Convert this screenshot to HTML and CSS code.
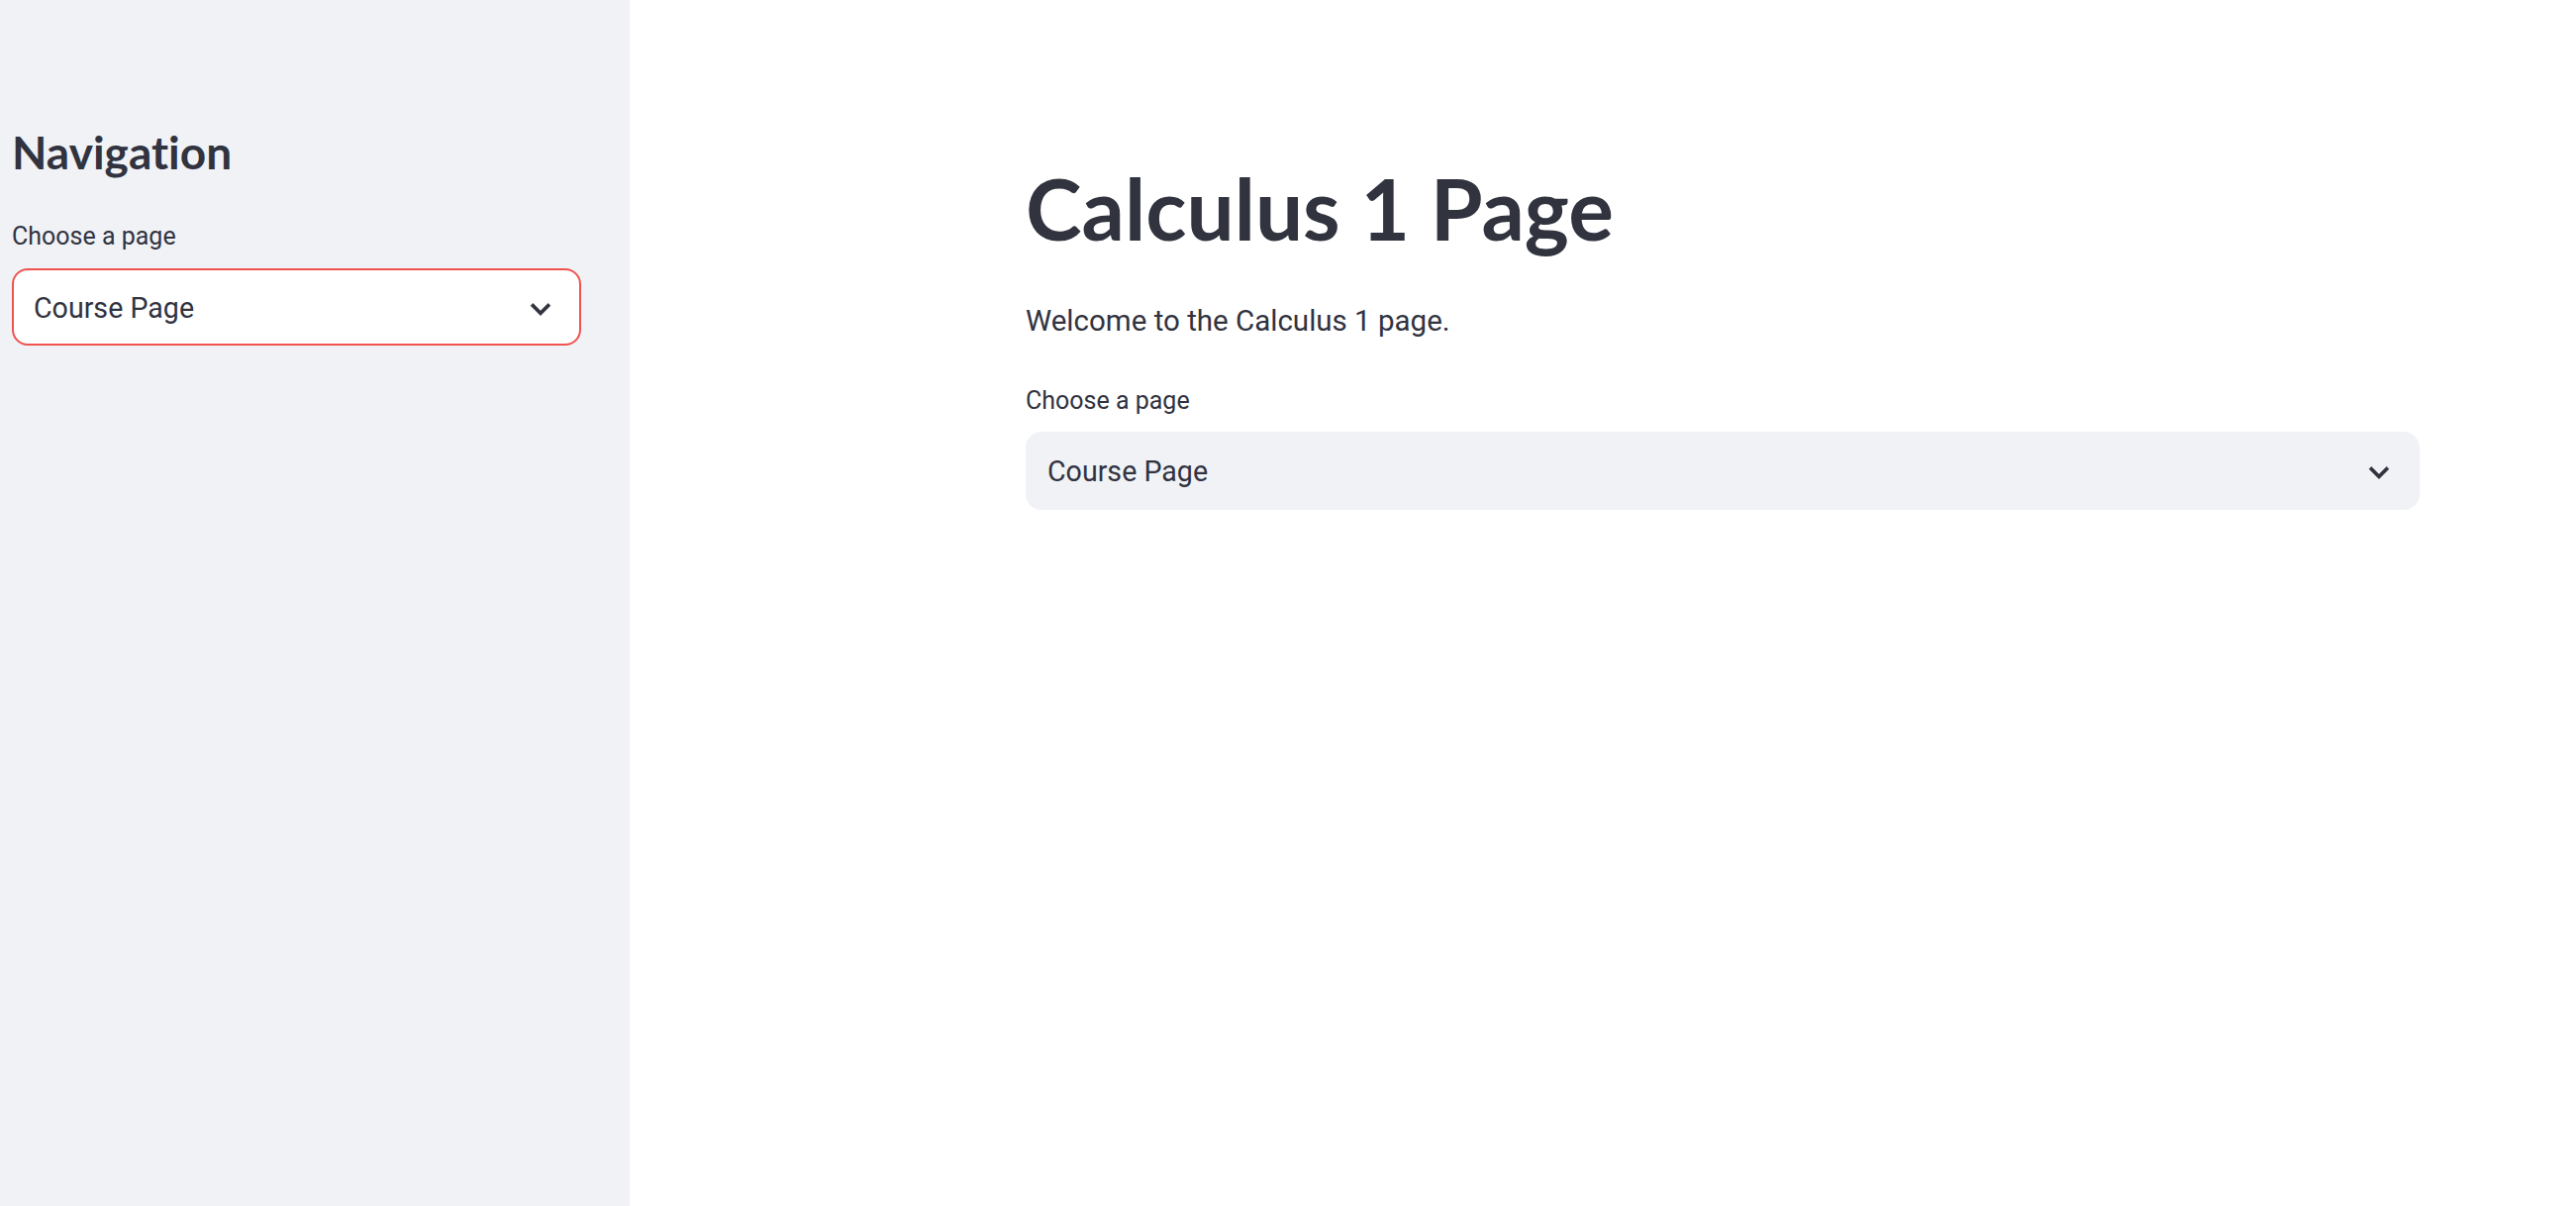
FILE: index.html
```html
<!DOCTYPE html>
<html lang="en">
<head>
<meta charset="utf-8">
<title>Calculus 1 Page</title>
<link rel="stylesheet" href="styles.css">
</head>
<body>
<div class="app">
  <aside class="sidebar">
    <h2 class="side-title">Navigation</h2>
    <div class="field">
      <label class="label">Choose a page</label>
      <div class="select select-focused">
        <span class="select-value">Course Page</span>
        <svg class="chevron" viewBox="0 0 24 24" width="40" height="40" aria-hidden="true"><path d="M16.59 8.59L12 13.17 7.41 8.59 6 10l6 6 6-6z" fill="#31333f" stroke="#31333f" stroke-width="0.25"/></svg>
      </div>
    </div>
  </aside>
  <main class="main">
    <div class="block">
      <h1 class="title">Calculus 1 Page</h1>
      <p class="text">Welcome to the Calculus 1 page.</p>
      <div class="field field-main">
        <label class="label">Choose a page</label>
        <div class="select select-plain">
          <span class="select-value">Course Page</span>
          <svg class="chevron" viewBox="0 0 24 24" width="40" height="40" aria-hidden="true"><path d="M16.59 8.59L12 13.17 7.41 8.59 6 10l6 6 6-6z" fill="#31333f" stroke="#31333f" stroke-width="0.25"/></svg>
        </div>
      </div>
    </div>
  </main>
</div>
</body>
</html>
```
FILE: styles.css
```css
html, body {
  margin: 0;
  padding: 0;
  height: 100%;
  overflow: hidden;
  background: #ffffff;
  color: #31333f;
  font-family: Roboto, "Liberation Sans", sans-serif;
  font-variant-ligatures: none;
}

.app {
  display: flex;
  height: 100vh;
}

.sidebar {
  width: 636px;
  flex: 0 0 636px;
  background: #f0f2f6;
  padding: 124px 49px 0 12px;
  box-sizing: border-box;
}

.side-title {
  margin: 0;
  font-family: Lato, Roboto, sans-serif;
  font-weight: 700;
  font-size: 46px;
  line-height: 60px;
}

.field {
  margin-top: 37px;
}

.label {
  display: block;
  font-size: 25px;
  line-height: 36px;
  font-weight: 400;
}

.select {
  margin-top: 14px;
  height: 78px;
  box-sizing: border-box;
  display: flex;
  align-items: center;
  justify-content: space-between;
  padding: 3px 19px 0 20px;
  border-radius: 16px;
  border: 2px solid transparent;
}

.select-focused {
  background: #ffffff;
  border-color: #f0524d;
}

.select-plain {
  background: #f0f2f6;
  height: 79px;
  margin-top: 13px;
}

.select-value {
  font-size: 28.6px;
  line-height: 1.1719;
}

.chevron {
  display: block;
  flex: 0 0 auto;
}

.main {
  flex: 1 1 auto;
  min-width: 0;
}

.block {
  margin-left: 400px;
  width: 1408px;
  padding-top: 159px;
}

.title {
  margin: 0;
  font-family: Lato, Roboto, sans-serif;
  font-weight: 700;
  font-size: 85.5px;
  line-height: 103px;
}

.text {
  margin: 40px 0 0;
  font-size: 29.5px;
  line-height: 44px;
}

.field-main {
  margin-top: 41px;
}
```
